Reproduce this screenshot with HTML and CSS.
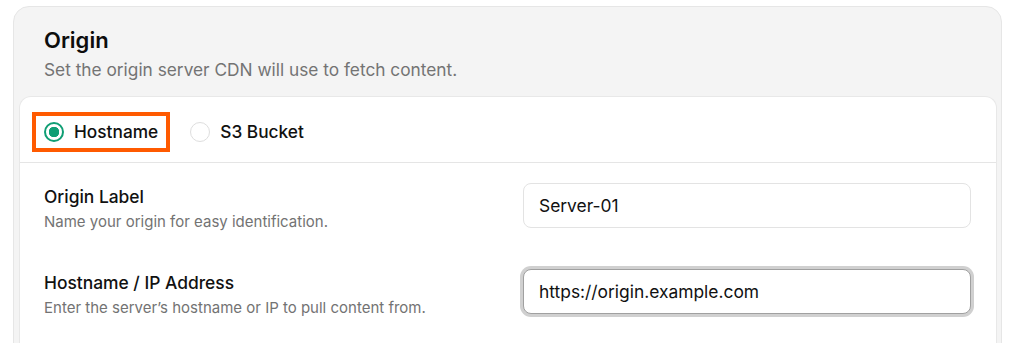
FILE: index.html
```
<html>
<head>
<title>Origin settings</title>
<link rel="stylesheet" href="styles.css">
</head>
<body>
  <div class="panel">
    <div class="panelHead">
      <h2 class="panelTitle">Origin</h2>
      <p class="panelSub">Set the origin server CDN will use to fetch content.</p>
    </div>
    <div class="card">
      <div class="choice">
        <label class="option highlighted">
          <input type="radio" name="origin_type" class="radio" checked>
          <span>Hostname</span>
        </label>
        <label class="option">
          <input type="radio" name="origin_type" class="radio">
          <span>S3 Bucket</span>
        </label>
      </div>
      <div class="fields">
        <div class="field">
          <div class="fieldText">
            <div class="fieldLabel">Origin Label</div>
            <div class="fieldHint">Name your origin for easy identification.</div>
          </div>
          <input class="textInput" type="text" value="Server-01">
        </div>
        <div class="field">
          <div class="fieldText">
            <div class="fieldLabel">Hostname / IP Address</div>
            <div class="fieldHint">Enter the server’s hostname or IP to pull content from.</div>
          </div>
          <input class="textInput focused" type="text" value="https://origin.example.com">
        </div>
      </div>
    </div>
  </div>
</body>
</html>
```

FILE: styles.css
```
body {
  margin: 0;
  padding: 6px 11px 0 13px;
  background: #ffffff;
  font-family: Inter, "Noto Sans", sans-serif;
  color: #111111;
}
.panel {
  background: #f4f4f4;
  border: 1px solid #e6e6e6;
  border-radius: 16px;
  padding: 0 4px 0 5px;
}
.panelHead { padding: 19px 25px 15px 25px; }
.panelTitle {
  margin: 0;
  font-size: 22px;
  line-height: 28px;
  font-weight: 600;
  color: #0d0d0d;
}
.panelSub {
  margin: 5px 0 0 0;
  font-size: 17.3px;
  line-height: 22px;
  color: #737373;
}
.card {
  background: #ffffff;
  border: 1px solid #e8e8e8;
  border-bottom: none;
  border-radius: 12px 12px 0 0;
  padding-bottom: 40px;
}
.choice {
  display: flex;
  align-items: center;
  gap: 8px;
  padding: 15px 12px 10px 12px;
  border-bottom: 1px solid #e5e5e5;
}
.option {
  display: flex;
  align-items: center;
  gap: 10px;
  padding: 4px 8px;
  border: 4px solid transparent;
  font-size: 17.3px;
  line-height: 24px;
  font-weight: 500;
  color: #111111;
}
.highlighted { border-color: #ff5a00; }
.radio {
  appearance: none;
  -webkit-appearance: none;
  margin: 0;
  width: 20px;
  height: 20px;
  border-radius: 50%;
  border: 1px solid #dedede;
  background: #ffffff;
}
.radio:checked {
  border: 2px solid #0f9e74;
  background: radial-gradient(circle, #0f9e74 0 5px, #ffffff 5.5px);
}
.fields {
  display: flex;
  flex-direction: column;
  gap: 37px;
  padding: 20px 25px 0 24px;
}
.field {
  display: flex;
  align-items: flex-start;
  justify-content: space-between;
}
.fieldText { padding-top: 2px; }
.fieldLabel {
  font-size: 17.4px;
  line-height: 24px;
  font-weight: 500;
  color: #111111;
}
.fieldHint {
  margin-top: 3px;
  font-size: 15px;
  line-height: 20px;
  color: #737373;
}
.textInput {
  box-sizing: border-box;
  width: 448px;
  height: 45px;
  padding: 0 15px;
  border: 1px solid #e3e3e3;
  border-radius: 8px;
  font-family: inherit;
  font-size: 17.4px;
  color: #111111;
  background: #ffffff;
  outline: none;
}
.focused {
  border-color: #a0a0a0;
  box-shadow: 0 0 0 3px #d0d0d0;
}
```
